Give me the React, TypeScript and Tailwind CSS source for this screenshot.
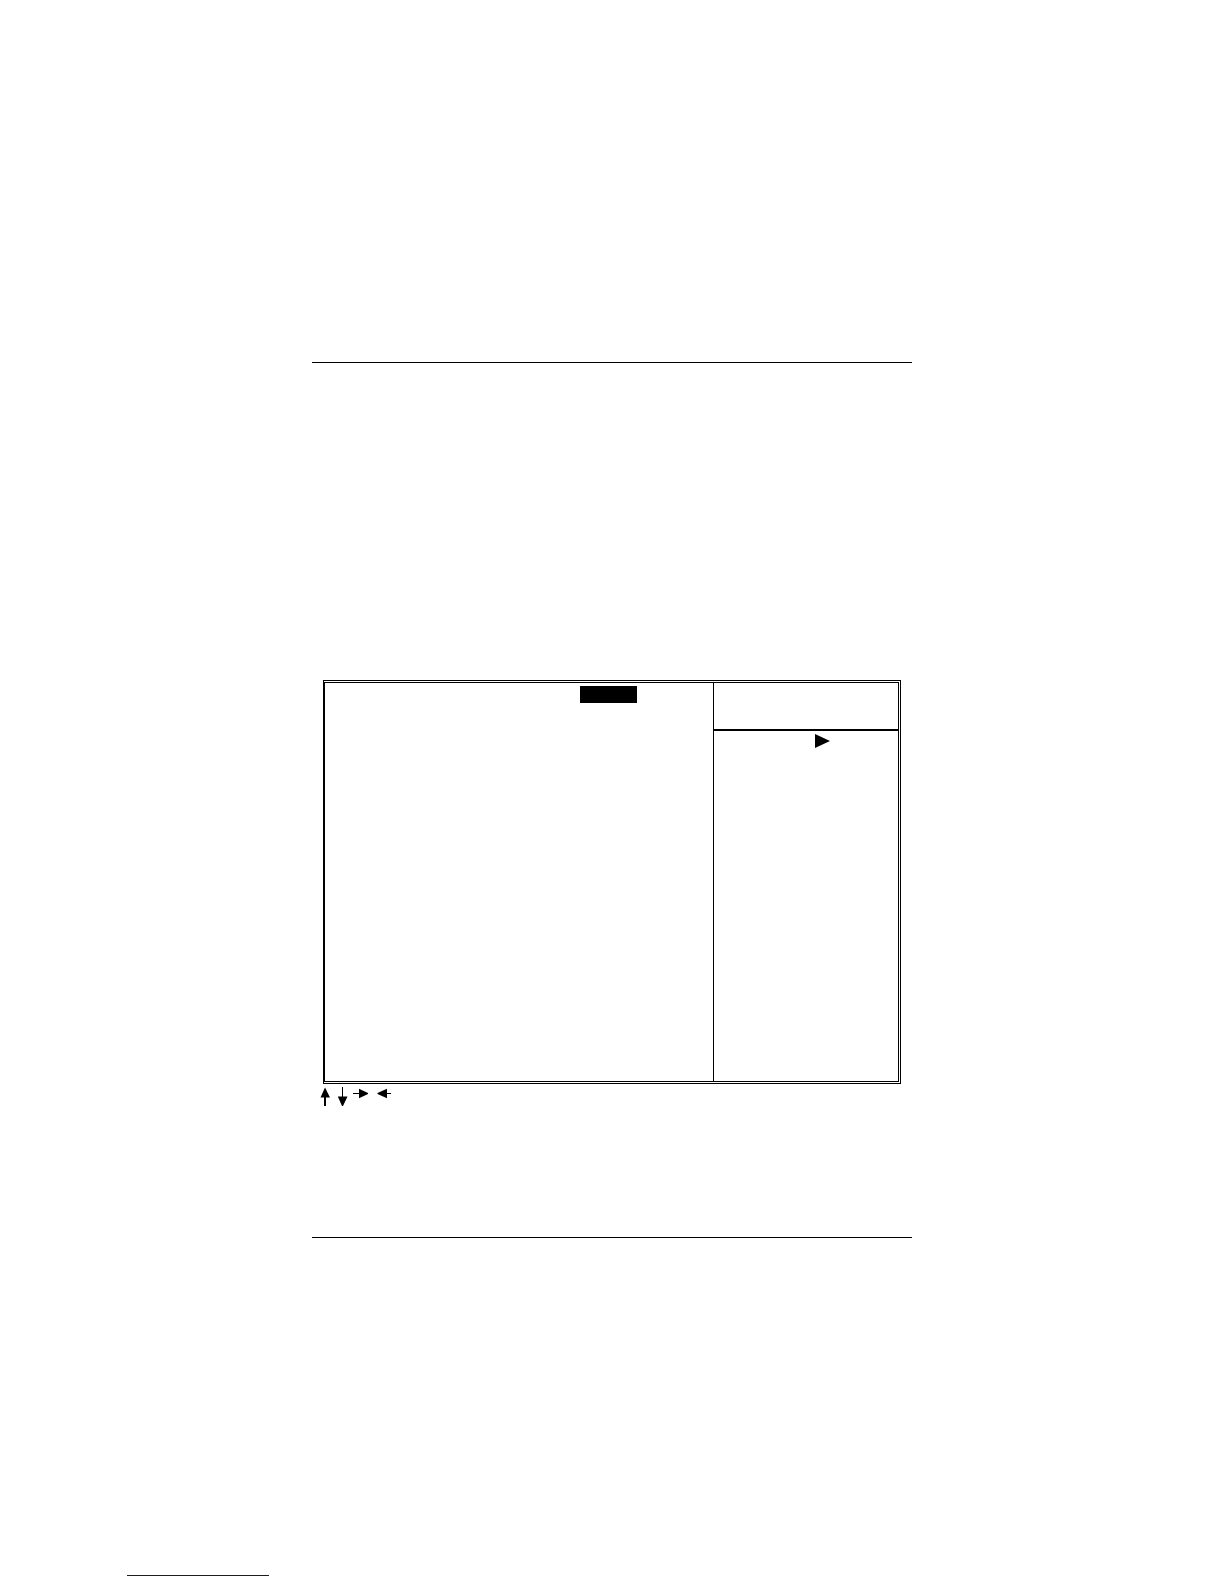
import React from "react";

const keys = [
  { name: "up", className: "h-5 w-3", viewBox: "0 0 12 20", d: "M5 .5L10 10.5H6V19H4V10.5H.5Z" },
  { name: "down", className: "ml-[5px] h-5 w-3", viewBox: "0 0 12 20", d: "M5 0H6V9.5H10.5L6 19H5L.8 9.5H5Z" },
  { name: "right", className: "ml-1 h-3 w-4", viewBox: "0 0 16 12", d: "M0 6H6V1.7L15 6V7L6 11.3V7H0Z" },
  { name: "left", className: "ml-2 h-3 w-4", viewBox: "0 0 16 12", d: "M14 6H10V1.7L.5 6V7L10 11.3V7H14Z" },
];

const NavigationKeys = () => (
  <div className="mt-[3px] flex h-5 items-start pl-2">
    {keys.map(({ name, className, viewBox, d }) => (
      <svg key={name} className={className} viewBox={viewBox} fill="black" aria-hidden="true">
        <path d={d} />
      </svg>
    ))}
  </div>
);

const SetupScreen = () => (
  <section className="mx-[11px] flex min-h-[404px] border-[3px] border-l-2 border-double border-black [border-left-style:solid]">
    <div className="flex flex-1 items-start justify-end pt-[3px] pr-[76px]">
      {/* selected menu tab */}
      <div className="h-[17px] w-[57px] bg-black" />
    </div>
    <aside className="w-[185px] border-l border-black">
      <div className="h-12 border-b-2 border-black" />
      <div className="flex pt-[3px] pl-[101px]">
        <svg className="h-[14px] w-[15px]" viewBox="0 0 15 14" fill="black" aria-hidden="true">
          <path d="M0 0L15 7L0 14Z" />
        </svg>
      </div>
    </aside>
  </section>
);

export default function App() {
  return (
    <div className="min-h-screen bg-white pt-[362px] pb-2">
      <main className="mx-auto max-w-[600px]">
        <hr className="mb-[317px] border-black" />
        <SetupScreen />
        <NavigationKeys />
        <hr className="mt-[130px] border-black" />
      </main>
      <footer className="mt-[337px] pl-[127px]">
        <div className="h-px w-[142px] bg-[#120a8f]" />
      </footer>
    </div>
  );
}
